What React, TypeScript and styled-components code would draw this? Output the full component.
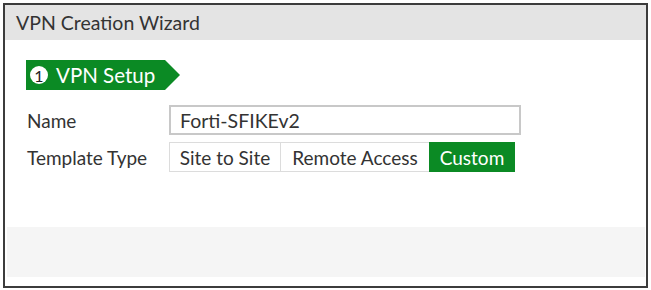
import React from "react";
import styled, { createGlobalStyle } from "styled-components";

const Global = createGlobalStyle`
  html, body { margin: 0; padding: 0; background: #ffffff; }
  body { font-family: Lato, "Open Sans", sans-serif; color: #333; }
`;

const Frame = styled.div`
  box-sizing: border-box;
  margin: 3px 0 0 3px;
  width: 645px;
  height: 285px;
  border: 2px solid #3c3c3c;
  background: #fff;
  display: flex;
  flex-direction: column;
`;

const Header = styled.div`
  height: 35px;
  background: #e4e4e4;
  display: flex;
  align-items: center;
  padding-left: 11px;
  font-size: 19.5px;
  color: #333;
`;

const Body = styled.div`
  height: 187px;
  padding: 20px 0 0 21px;
  box-sizing: border-box;
  display: flex;
  flex-direction: column;
  align-items: flex-start;
`;

const Step = styled.div`
  height: 30px;
  display: flex;
  align-items: center;
  gap: 8px;
  padding: 0 0 0 4px;
  background: #0b8a24;
  color: #fff;
  font-size: 20.5px;
  clip-path: polygon(0 0, calc(100% - 15px) 0, 100% 50%, calc(100% - 15px) 100%, 0 100%);
  width: 154px;
  box-sizing: border-box;
  white-space: nowrap;
`;

const StepNum = styled.span`
  width: 18px;
  height: 18px;
  border-radius: 50%;
  background: #fff;
  color: #222;
  font-size: 16px;
  display: flex;
  align-items: center;
  justify-content: center;
  flex: none;
`;

const Form = styled.div`
  margin-top: 15px;
  display: grid;
  grid-template-columns: 143px auto;
  row-gap: 7px;
  align-items: center;
`;

const Label = styled.div`
  font-size: 19px;
  color: #333;
  padding-left: 1px;
`;

const Input = styled.div`
  box-sizing: border-box;
  width: 352px;
  height: 30px;
  border: 2px solid #c8c8c8;
  display: flex;
  align-items: center;
  padding-left: 9px;
  font-size: 19.5px;
  color: #333;
`;

const Segments = styled.div`
  display: flex;
  height: 30px;
`;

const Segment = styled.div<{ $active?: boolean }>`
  box-sizing: border-box;
  height: 30px;
  display: flex;
  align-items: center;
  justify-content: center;
  font-size: 19px;
  border: 1px solid ${(p) => (p.$active ? "#0b8a24" : "#dcdcdc")};
  margin-left: -1px;
  background: ${(p) => (p.$active ? "#0b8a24" : "#fff")};
  color: ${(p) => (p.$active ? "#fff" : "#333")};
  &:first-child { margin-left: 0; }
`;

const Footer = styled.div`
  height: 50px;
  margin: 0 1px 0 2px;
  background: #f5f5f5;
`;

export default function App() {
  return (
    <>
      <Global />
      <Frame>
        <Header>VPN Creation Wizard</Header>
        <Body>
          <Step>
            <StepNum>1</StepNum>
            VPN Setup
          </Step>
          <Form>
            <Label>Name</Label>
            <Input>Forti-SFIKEv2</Input>
            <Label>Template Type</Label>
            <Segments>
              <Segment style={{ width: 112 }}>Site to Site</Segment>
              <Segment style={{ width: 150 }}>Remote Access</Segment>
              <Segment $active style={{ width: 86 }}>Custom</Segment>
            </Segments>
          </Form>
        </Body>
        <Footer />
      </Frame>
    </>
  );
}
